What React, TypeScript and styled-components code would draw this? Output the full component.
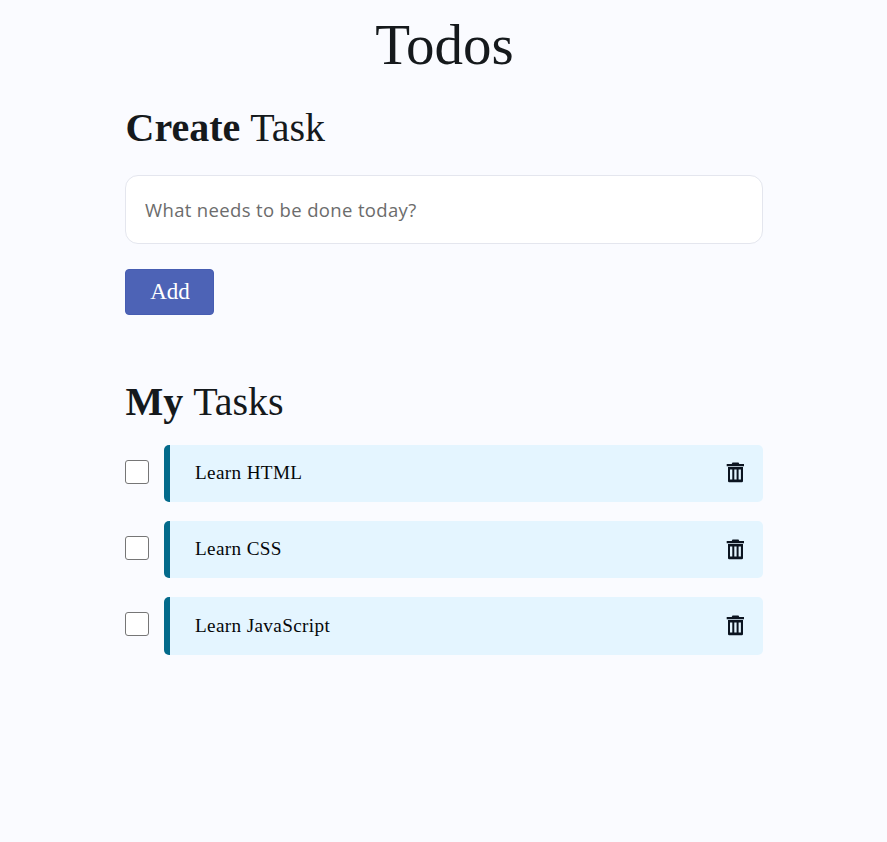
import React from 'react';
import styled, { createGlobalStyle } from 'styled-components';

const GlobalStyle = createGlobalStyle`
  *, *::before, *::after { box-sizing: border-box; }
  body {
    margin: 0;
    background: #fafbff;
    color: #15191c;
    font-family: "Liberation Serif", "Times New Roman", serif;
  }
`;

const Page = styled.main`
  min-height: 842px;
  width: 638px;
  margin: 0 auto 0 125px;
  padding-top: 12px;
`;

const Title = styled.h1`
  margin: 0;
  padding-left: 1px;
  font-size: 57px;
  line-height: 66px;
  font-weight: 400;
  text-align: center;
`;

const Heading = styled.h2<{ $top: number }>`
  margin: ${(p) => p.$top}px 0 0;
  padding-left: 0.5px;
  font-size: 40px;
  line-height: 46px;
  font-weight: 400;
  word-spacing: 0.6px;
`;

const Form = styled.form`
  display: flex;
  flex-direction: column;
  align-items: flex-start;
  gap: 25px;
  margin-top: 24px;
`;

const TaskInput = styled.input`
  width: 100%;
  height: 69px;
  padding: 0 19px;
  border: 1px solid #e4e6ee;
  border-radius: 13px;
  background: #fff;
  font: 400 18.5px "Open Sans", "Noto Sans", sans-serif;
  letter-spacing: 0.35px;
  &::placeholder { color: #6c6c6c; opacity: 1; }
`;

const AddButton = styled.button`
  width: 89px;
  height: 46px;
  padding: 0 0 0 1px;
  border: 1px solid #465db2;
  border-radius: 4px;
  background: #4d63b6;
  color: #fff;
  font: 23px "Liberation Serif", serif;
`;

const TaskList = styled.ul`
  display: flex;
  flex-direction: column;
  gap: 19px;
  margin: 20px 0 0;
  padding: 0;
  list-style: none;
`;

const TaskItem = styled.li`
  display: grid;
  grid-template-columns: 24px 1fr;
  column-gap: 15px;
  align-items: start;
`;

const Check = styled.input`
  appearance: none;
  width: 24px;
  height: 24px;
  margin: 15px 0 0;
  border: 1px solid #767676;
  border-radius: 3px;
  background: #fff;
`;

const Card = styled.div<{ $height: number }>`
  display: flex;
  align-items: center;
  justify-content: space-between;
  height: ${(p) => p.$height}px;
  padding: 0 18px 0 25px;
  border-left: 6px solid #036a8b;
  border-radius: 5px;
  background: #e4f5ff;
`;

const Label = styled.span<{ $bottom: number }>`
  padding-bottom: ${(p) => p.$bottom}px;
  color: #050709;
  font-size: 19.2px;
  letter-spacing: 0.35px;
`;

const DeleteButton = styled.button<{ $top: number }>`
  display: flex;
  align-self: flex-start;
  margin-top: ${(p) => p.$top}px;
  padding: 0;
  border: 0;
  background: none;
  color: #0b1420;
`;

const TrashIcon = () => (
  <svg width="19" height="21" viewBox="0 0 19 21" fill="currentColor">
    <path d="M6.500 0.500h6l0.800 1.500H18v2.200H0.700V2h5z" />
    <path
      fillRule="evenodd"
      d="M2 5h15v14q0 1.200-1.200 1.200H3.200Q2 20.200 2 19zM4 7.500v10h2.300v-10zM8.300 7.500v10h2.300v-10zM12.600 7.500v10h2.300v-10z"
    />
  </svg>
);

const tasks = [
  { name: 'Learn HTML', height: 57, labelBottom: 2, iconTop: 17 },
  { name: 'Learn CSS', height: 57, labelBottom: 2, iconTop: 18 },
  { name: 'Learn JavaScript', height: 58, labelBottom: 1, iconTop: 18 },
];

export default function App() {
  return (
    <Page>
      <GlobalStyle />
      <Title>Todos</Title>
      <Heading $top={27}><b>Create</b> Task</Heading>
      <Form onSubmit={(e) => e.preventDefault()}>
        <TaskInput placeholder="What needs to be done today?" />
        <AddButton>Add</AddButton>
      </Form>
      <Heading $top={64}><b>My</b> Tasks</Heading>
      <TaskList>
        {tasks.map((task) => (
          <TaskItem key={task.name}>
            <Check type="checkbox" aria-label={task.name} />
            <Card $height={task.height}>
              <Label $bottom={task.labelBottom}>{task.name}</Label>
              <DeleteButton $top={task.iconTop} aria-label={`Delete ${task.name}`}>
                <TrashIcon />
              </DeleteButton>
            </Card>
          </TaskItem>
        ))}
      </TaskList>
    </Page>
  );
}
